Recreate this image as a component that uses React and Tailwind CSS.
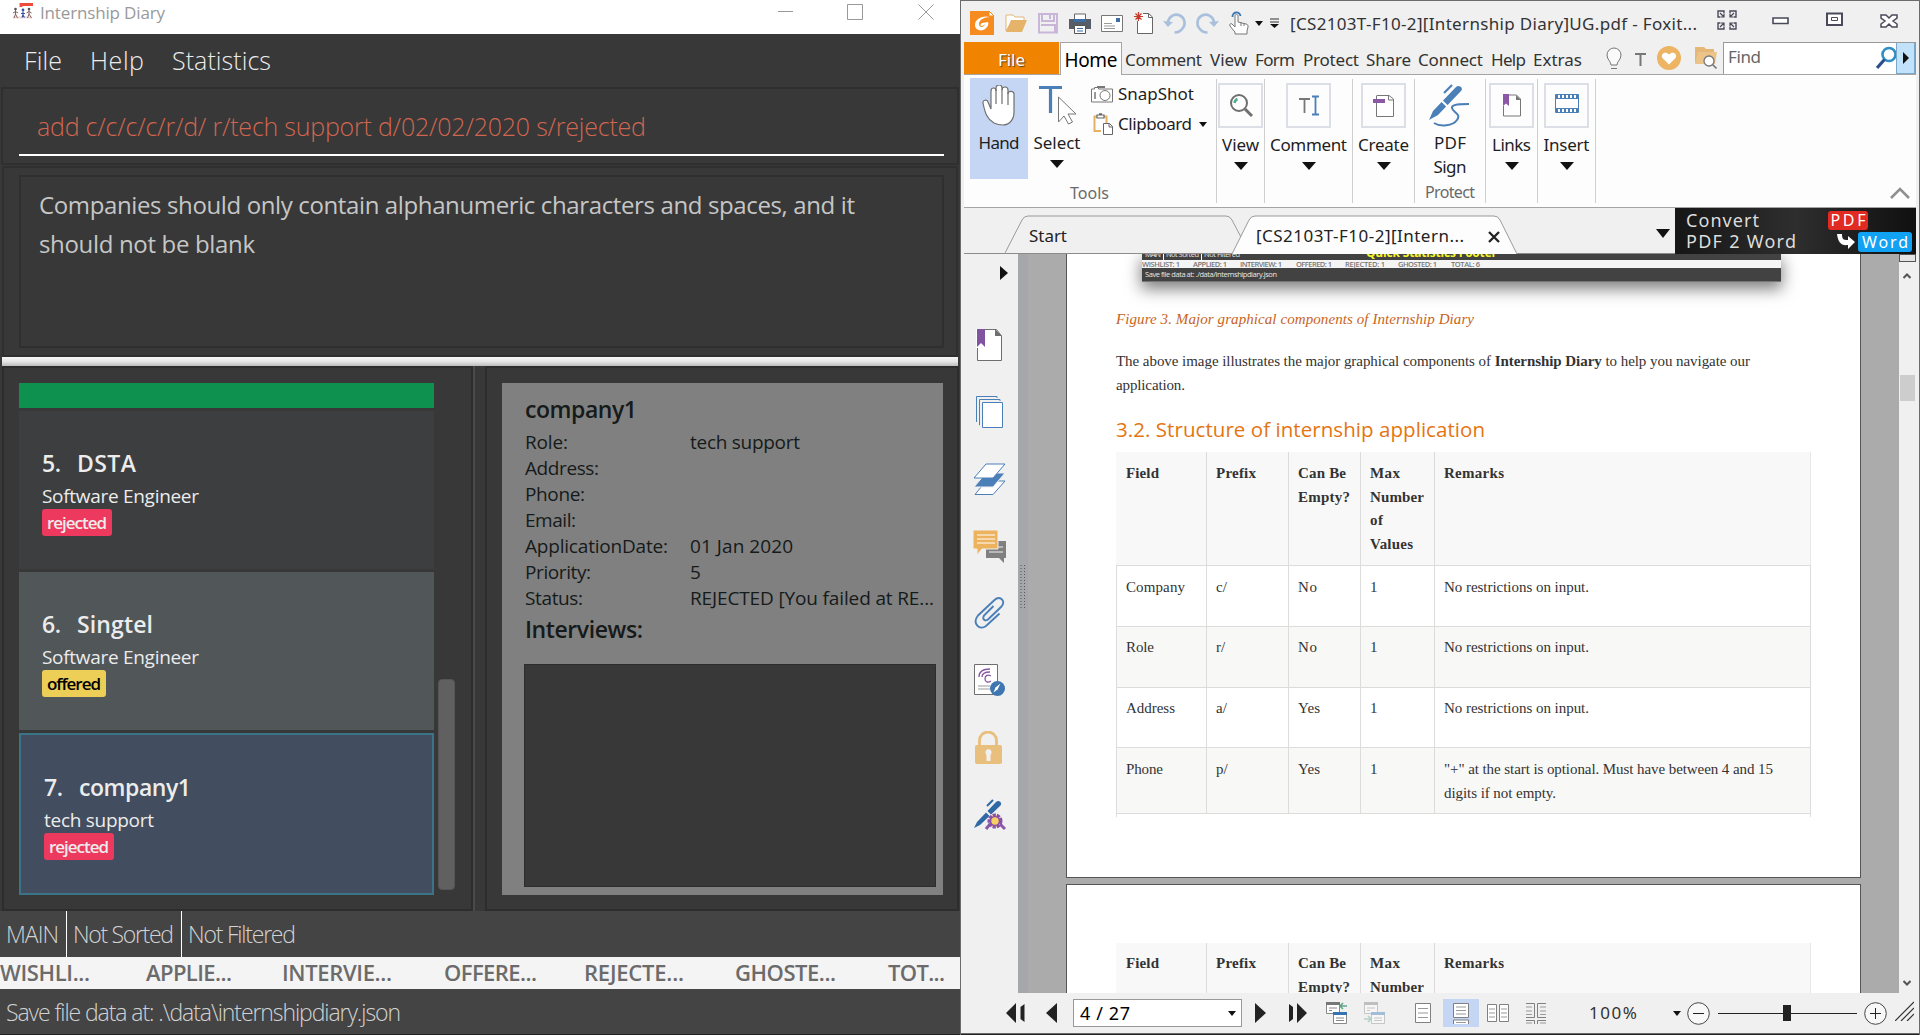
import React, { useLayoutEffect, useRef } from "react";

/* One line of text whose tracking is adjusted so that it fills its box. */
function Fit({ className = "", children }) {
  const box = useRef(null);
  const text = useRef(null);
  useLayoutEffect(() => {
    const el = text.current;
    el.style.letterSpacing = "0px";
    const gaps = Math.max(1, el.textContent.length - 1);
    const spare = box.current.clientWidth - el.getBoundingClientRect().width;
    el.style.letterSpacing = `${spare / gaps}px`;
  });
  return (
    <div ref={box} className={`shrink-0 whitespace-nowrap ${className}`}>
      <span ref={text}>{children}</span>
    </div>
  );
}

function Icon({ w, h, className = "", children }) {
  return (
    <svg width={w} height={h} viewBox={`0 0 ${w} ${h}`} fill="none" className={`block shrink-0 ${className}`}>
      {children}
    </svg>
  );
}

function Down({ w = 14, h = 8, className = "" }) {
  return (
    <Icon w={w} h={h} className={className}>
      <path d={`M0 0H${w}L${w / 2} ${h}Z`} fill="#111" />
    </Icon>
  );
}

/* ---------- Internship Diary ---------- */

function Badge({ tone, className, children }) {
  return (
    <div className={`flex h-[27px] items-center rounded-[3px] px-[5px] text-[17px] leading-[27px] font-semibold ${tone} ${className}`}>
      <Fit className="w-full">{children}</Fit>
    </div>
  );
}

function Company({ no, name, nameW, role, roleW, badge, tone, badgeW, className }) {
  return (
    <div className={className}>
      <div className="flex gap-4 text-[23px] leading-[30px] font-semibold">
        <Fit className="w-[19px]">{no}</Fit>
        <Fit className={nameW}>{name}</Fit>
      </div>
      <Fit className={`mt-[5px] text-[19px] leading-[26px] ${roleW}`}>{role}</Fit>
      <Badge tone={tone} className={badgeW}>{badge}</Badge>
    </div>
  );
}

const details = [
  ["Role:", "w-[43px]", "tech support", "w-[110px]"],
  ["Address:", "w-[74px]", "", ""],
  ["Phone:", "w-[60px]", "", ""],
  ["Email:", "w-[51px]", "", ""],
  ["ApplicationDate:", "w-[143px]", "01 Jan 2020", "w-[103px]"],
  ["Priority:", "w-[66px]", "5", "w-[10px]"],
  ["Status:", "w-[58px]", "REJECTED [You failed at RE...", "w-[244px]"],
];

const stats = [
  ["WISHLI...", "w-[90px]"],
  ["APPLIE...", "ml-[56px] w-[86px]"],
  ["INTERVIE...", "ml-[50px] w-[110px]"],
  ["OFFERE...", "ml-[52px] w-[93px]"],
  ["REJECTE...", "ml-[47px] w-[100px]"],
  ["GHOSTE...", "ml-[51px] w-[101px]"],
  ["TOT...", "ml-[52px] w-[57px]"],
];

function Diary() {
  return (
    <div className="flex h-[1035px] w-[960px] flex-col bg-[#383838] font-['Open_Sans',sans-serif] text-[#ececec]">
      <div className="flex h-[34px] items-start bg-white text-[#999]">
        <Icon w={21} h={18} className="mt-[2px] ml-3">
          <path d="M9 5V2.500H21" stroke="#ee4b3b" strokeWidth="2.800" />
          <path d="M1 15.500h19" stroke="#f0d9d5" strokeWidth="2" />
          <circle cx="3.500" cy="7" r="1.300" fill="#555" />
          <circle cx="11" cy="8" r="1.400" fill="#3452a8" />
          <circle cx="17" cy="7" r="1.300" fill="#555" />
          <path d="M3.500 8v4l-1.500 4M3.500 12l2 4M1 11l2.500-1.500 2.500 1.500M17 8v4l-1.500 4M17 12l2.500 4M14.500 11l2.500-1.500 2.500 1.500" stroke="#86605c" />
          <path d="M11 9.500v3.500l-1 2.500M11 13l1.500 2.500M9 11.500h4" stroke="#3452a8" strokeWidth="1.200" />
        </Icon>
        <Fit className="ml-[7px] w-[125px] text-[17px] leading-[25px]">Internship Diary</Fit>
        <Icon w={16} h={16} className="mt-1 ml-[613px]"><path d="M0 7.500H15" stroke="#999" /></Icon>
        <Icon w={16} h={16} className="mt-1 ml-[53px]"><path d="M.5 .5h15v15H.5z" stroke="#999" /></Icon>
        <Icon w={16} h={16} className="mt-1 ml-[55px]"><path d="M.5 .5l15 15M15.500 .5l-15 15" stroke="#999" /></Icon>
      </div>

      <div className="flex h-[53px] items-center pl-[24px] text-[25px] leading-[53px] font-light">
        <Fit className="w-[38px]">File</Fit>
        <Fit className="ml-[28px] w-[54px]">Help</Fit>
        <Fit className="ml-[28px] w-[99px]">Statistics</Fit>
      </div>

      <div className="mx-px h-[78px] border-2 border-[#2f2f2f] pt-[17px] pr-[13px] pl-[16px]">
        <div className="h-[50px] border-b-2 border-white pl-[18px] text-[25px] leading-[41px] font-light text-[#d06651]">
          <Fit className="w-[609px]">add c/c/c/c/r/d/ r/tech support d/02/02/2020 s/rejected</Fit>
        </div>
      </div>

      <div className="mx-[2px] mt-px h-[191px] border-2 border-[#2f2f2f] py-[7px] pr-[12px] pl-[15px]">
        <div className="h-[173px] border-2 border-[#2f2f2f] pt-[8px] pl-[18px] text-[24px] leading-[39px] text-[#c6c6c6]">
          <Fit className="w-[816px]">Companies should only contain alphanumeric characters and spaces, and it</Fit>
          <Fit className="w-[216px]">should not be blank</Fit>
        </div>
      </div>

      <div className="mx-[2px] h-[9px] bg-linear-to-b from-[#f6f6f6] via-[#e6e6e6] to-[#bdbdbd]" />

      <div className="flex h-[545px]">
        <div className="ml-[2px] flex w-[471px] border-2 border-[#2d2d2d] pt-[15px] pl-[15px]">
          <div className="flex w-[415px] flex-col gap-[3px]">
            <div className="h-[25px] bg-[#0e914f]" />
            <Company no="5." name="DSTA" nameW="w-[59px]" role="Software Engineer" roleW="w-[157px]" badge="rejected"
              tone="bg-[#ed395d]" badgeW="w-[70px]" className="h-[158px] bg-[#3c3e3f] pt-[37px] pl-[23px]" />
            <Company no="6." name="Singtel" nameW="w-[76px]" role="Software Engineer" roleW="w-[157px]" badge="offered"
              tone="bg-[#edce57] text-black" badgeW="w-[64px]" className="h-[158px] bg-[#515658] pt-[37px] pl-[23px]" />
            <Company no="7." name="company1" nameW="w-[112px]" role="tech support" roleW="w-[110px]" badge="rejected"
              tone="bg-[#ed395d]" badgeW="w-[70px]" className="h-[162px] border-2 border-[#3b7489] bg-[#424d5f] pt-[37px] pl-[23px]" />
          </div>
          <div className="mt-[296px] ml-1 h-[211px] w-[17px] rounded-[4px] border border-[#555] bg-[#606060]" />
        </div>
        <div className="w-[12px] border-l-2 border-[#4a4a4a]" />
        <div className="w-[474px] border-2 border-[#2d2d2d] pt-[15px] pl-[15px]">
          <div className="h-[512px] w-[441px] bg-[#808080] pt-[11px] pl-[22px] text-[#151a1a]">
            <Fit className="ml-px w-[112px] text-[23px] leading-[30px] font-semibold">company1</Fit>
            <div className="mt-[5px] ml-px text-[19px] leading-[26px]">
              {details.map(([label, lw, value, vw]) => (
                <div key={label} className="flex">
                  <div className="w-[165px]"><Fit className={lw}>{label}</Fit></div>
                  {value && <Fit className={vw}>{value}</Fit>}
                </div>
              ))}
            </div>
            <Fit className="mt-[3px] ml-px w-[118px] text-[23px] leading-[30px] font-semibold">Interviews:</Fit>
            <div className="mt-[20px] h-[223px] w-[412px] border border-[#2d2d2d] bg-[#383838]" />
          </div>
        </div>
      </div>

      <div className="flex h-[46px] bg-[#444] pl-[6px] text-[23px] leading-[47px] font-light text-[#d2d2d2]">
        <Fit className="w-[53px]">MAIN</Fit>
        <div className="ml-[7px] w-px bg-white" />
        <Fit className="ml-[6px] w-[101px]">Not Sorted</Fit>
        <div className="ml-[7px] w-px bg-white" />
        <Fit className="ml-[6px] w-[108px]">Not Filtered</Fit>
      </div>
      <div className="flex h-[32px] bg-[#f4f4f4] text-[22px] leading-[31px] font-semibold text-[#6b6b6b]">
        {stats.map(([label, c]) => <Fit key={label} className={c}>{label}</Fit>)}
      </div>
      <div className="h-[46px] border-b border-[#222] bg-[#444] pl-[6px] text-[23px] leading-[46px] font-light text-[#d2d2d2]">
        <Fit className="w-[395px]">Save file data at: .\data\internshipdiary.json</Fit>
      </div>
    </div>
  );
}

/* ---------- PDF viewer ---------- */

function TitleBar() {
  return (
    <div className="flex h-[41px] items-center pt-[3px] pl-[9px]">
      <Icon w={24} h={24}>
        <path d="M0 0h19l5 5v19H0z" fill="#f68b1f" />
        <path d="M19 0v5h5z" fill="#fff" stroke="#f68b1f" />
        <path d="M20 6C12 4 5 8 5 14c0 5 6 7 10 4 3-2 4-5 3-7l-6 1c-2 1-2 3 0 3 1 0 2-1 3-2-1 4-6 4-6 0 0-4 5-7 11-7z" fill="#fff" />
      </Icon>
      <Icon w={22} h={24} className="ml-[11px]">
        <path d="M1 20V4h7l2 2h9v4H7L1 20" fill="#fff" stroke="#e0b878" />
        <path d="M6 9h16l-5 12H1z" fill="#e5b36a" />
      </Icon>
      <Icon w={20} h={24} className="ml-[11px]">
        <path d="M1 3h18v18.500H1z" stroke="#c9b5d8" strokeWidth="2" />
        <path d="M4 3v7h12V3M3 14h14v8" stroke="#c9b5d8" strokeWidth="2" />
        <path d="M11 4h2v4h-2z" fill="#c9b5d8" />
      </Icon>
      <Icon w={22} h={24} className="ml-[11px]">
        <path d="M5.500 8V3h11v5" fill="#fff" stroke="#666" />
        <path d="M0 8h22v10H0z" fill="#555e66" />
        <path d="M5 8h12v3H5z" fill="#3c6ea5" />
        <path d="M5.500 14.500h11v8h-11z" fill="#fff" stroke="#555" />
        <path d="M8 17.500h6M8 20h6" stroke="#3c6ea5" />
      </Icon>
      <Icon w={22} h={24} className="ml-[10px]">
        <path d="M.5 4.500h21v16H.5z" fill="#fff" stroke="#777" />
        <path d="M15 7h4v4h-4z" fill="#3c6ea5" />
        <path d="M3 12.500h8M3 15h11M3 17.500h11" stroke="#999" />
      </Icon>
      <Icon w={19} h={24} className="ml-[11px]">
        <path d="M3.500 10v12.500h15V6l-4-3.500H9" fill="#fff" stroke="#666" />
        <path d="M14.500 2.500V6.500h4" stroke="#666" />
        <path d="M4.500 1v9M0 5.500h9M1.500 2.500l6 6M7.500 2.500l-6 6" stroke="#c23b2b" strokeWidth="1.200" />
      </Icon>
      <Icon w={24} h={24} className="ml-[10px]">
        <path d="M5 11C6 5 12 2 17 4.500s6 9 2.500 13c-2 3-5 4-8 4" stroke="#a9c0dc" strokeWidth="2.600" />
        <path d="M0 10l5 6 5-5z" fill="#a9c0dc" />
      </Icon>
      <Icon w={24} h={24} className="ml-[8px]">
        <path d="M19 11C18 5 12 2 7 4.500s-6 9-2.500 13c2 3 5 4 8 4" stroke="#a9c0dc" strokeWidth="2.600" />
        <path d="M24 10l-5 6-5-5z" fill="#a9c0dc" />
      </Icon>
      <Icon w={20} h={24} className="ml-[10px]">
        <path d="M5 20l-4-5c-1-2 1-3 2-2l3 3V5c0-2 3-2 3 0v6l8 2c2 .5 2 1 2 3l-1 4v3H6v-2z" fill="#fff" stroke="#777" />
        <path d="M3.500 6a4 4 0 1 1 8-1" stroke="#3c78b4" strokeWidth="1.800" />
        <path d="M12 11v4M15 12v3" stroke="#777" />
      </Icon>
      <Down w={8} h={5} className="ml-[6px]" />
      <Icon w={9} h={10} className="ml-[7px]"><path d="M0 1h9M0 4h9" stroke="#333" /><path d="M0 6h9L4.500 10z" fill="#111" /></Icon>
      <Fit className="mt-px ml-[11px] w-[407px] text-[17px] leading-6 text-[#333]">[CS2103T-F10-2][Internship Diary]UG.pdf - Foxit...</Fit>
      <Icon w={20} h={21} className="-mt-[6px] ml-[20px]">
        <g stroke="#4a4a5a" strokeWidth="1.400">
          <path d="M7 3.500V1H1v6h2.500M13 3.500V1h6v6h-2.500M7 16.500V19H1v-6h2.500M13 16.500V19h6v-6h-2.500" />
          <path d="M3 3l4 4M4 7h3V4M17 3l-4 4M16 7h-3V4M3 17l4-4M4 13h3v3M17 17l-4-4M16 13h-3v3" strokeWidth="1.200" />
        </g>
      </Icon>
      <Icon w={17} h={8} className="-mt-[5px] ml-[35px]"><path d="M1 1h15v5.500H1z" fill="#fff" stroke="#4a4a5a" strokeWidth="1.600" /></Icon>
      <Icon w={17} h={14} className="-mt-[8px] ml-[37px]">
        <path d="M1 1.500h15v11.500H1z" fill="#fff" stroke="#4a4a5a" strokeWidth="2" />
        <path d="M5.500 5.500h6v3h-6z" stroke="#4a4a5a" />
      </Icon>
      <Icon w={18} h={14} className="-mt-[5px] ml-[37px]">
        <path d="M1 1h5l3 3 3-3h5v3l-4 3 4 3v3h-5l-3-3-3 3H1v-3l4-3-4-3z" fill="#fff" stroke="#4a4a5a" strokeWidth="1.500" />
      </Icon>
    </div>
  );
}

const menus = [
  ["Comment", "ml-[3px] w-[77px]"],
  ["View", "ml-[8px] w-[37px]"],
  ["Form", "ml-[8px] w-[40px]"],
  ["Protect", "ml-[8px] w-[56px]"],
  ["Share", "ml-[7px] w-[45px]"],
  ["Connect", "ml-[7px] w-[65px]"],
  ["Help", "ml-[8px] w-[35px]"],
  ["Extras", "ml-[7px] w-[49px]"],
];

function MenuBar() {
  return (
    <div className="mx-[3px] flex h-[33px] border-b border-[#a5a5a5] text-[17px] leading-[35px] text-[#333]">
      <div className="flex h-8 w-[95px] justify-center bg-[#f08300] text-white text-shadow-[1px_1px_1px_#5a4020]">
        <Fit className="w-[27px]">File</Fit>
      </div>
      <div className="ml-px flex h-[33px] w-[62px] justify-center border-x border-t border-[#a5a5a5] bg-[#fdfdfd] text-[19px] leading-[34px] text-black">
        <Fit className="w-[53px]">Home</Fit>
      </div>
      {menus.map(([label, c]) => <Fit key={label} className={c}>{label}</Fit>)}
      <Icon w={16} h={23} className="mt-[5px] ml-[24px]">
        <path d="M5 18c0-4-4-5-4-10a7 7 0 0 1 14 0c0 5-4 6-4 10zM5 21.500h6" stroke="#777" fill="#fafafa" />
      </Icon>
      <Icon w={11} h={13} className="mt-[11px] ml-[13px]"><path d="M0 1h11M5.500 1v12" stroke="#777" strokeWidth="2" /></Icon>
      <Icon w={24} h={24} className="mt-[4px] ml-[11px]">
        <circle cx="12" cy="12" r="12" fill="#ecb463" />
        <path d="M12 18.500L5.500 12C3 8.500 8 4.500 12 8.500c4-4 9 0 6.500 3.500z" fill="#fff" />
      </Icon>
      <Icon w={22} h={23} className="mt-[5px] ml-[14px]">
        <path d="M0 17V0h9l2 2h8v4H5z" fill="#e5b878" />
        <path d="M3 5h19l-2 12H0z" fill="#ecc48a" />
        <circle cx="14" cy="14" r="5" fill="#fff" stroke="#777" strokeWidth="1.300" />
        <path d="M17.500 17.500l4 4" stroke="#777" strokeWidth="1.600" />
      </Icon>
      <div className="ml-auto flex h-8 w-[193px] border border-[#999] border-b-0 bg-white">
        <Fit className="ml-[4px] w-[33px] leading-[28px] text-[#666]">Find</Fit>
        <Icon w={20} h={24} className="mt-[3px] ml-[115px]">
          <circle cx="13" cy="8.500" r="6.500" stroke="#2f8fc4" strokeWidth="2.600" />
          <path d="M8.500 13.500L1 22" stroke="#2c4f8c" strokeWidth="3.200" />
        </Icon>
        <div className="flex w-5 items-center justify-center border border-t-0 border-[#7aa7cc] bg-[#c2e2fb]">
          <Icon w={6} h={12}><path d="M0 0l6 6-6 6z" fill="#111" /></Icon>
        </div>
      </div>
    </div>
  );
}

function RibbonGroup({ className, label, labelW, children }) {
  return (
    <div className={`mt-1 flex h-[124px] flex-col items-center border-r border-[#cfcfcf] pt-1 ${className}`}>
      <div className="flex h-[45px] w-[45px] items-center justify-center border-2 border-[#dcdfe5] bg-[#fdfdfd]">{children}</div>
      <Fit className={`mt-[5px] leading-6 ${labelW}`}>{label}</Fit>
      <Down className="mt-[5px]" />
    </div>
  );
}

function Ribbon() {
  return (
    <div className="mx-[3px] flex h-[133px] border-b border-[#a5a5a5] bg-[#fdfdfd] pl-[6px] text-[17px] text-[#1e1e1e]">
      <div className="mt-1 flex h-[124px] w-[247px] flex-col border-r border-[#cfcfcf]">
        <div className="flex h-[100px]">
          <div className="-mt-px flex h-[101px] w-[58px] flex-col items-center bg-[#c4d6f3] pt-[7px]">
            <Icon w={34} h={41}>
              <path d="M12 38C5 34 3 28 1 18c-.5-3 4-4 5-1l3 7V6c0-4 5-4 5 0V3c0-4 6-4 6 0v2c0-4 6-4 6 0v4c0-4 6-3 6 0v18c0 8-5 13-11 13-4 0-7-1-9-2z" fill="#fff" stroke="#707070" strokeWidth="1.200" />
              <path d="M14 4v15M20 4v15M26 7v13" stroke="#707070" strokeWidth="1.200" />
            </Icon>
            <Fit className="mt-[5px] w-[41px] leading-6">Hand</Fit>
          </div>
          <div className="ml-[5px] flex w-[48px] flex-col items-center pt-[6px]">
            <Icon w={38} h={40}>
              <path d="M1 2.500h23M12.500 2v26" stroke="#4a7fb8" strokeWidth="3.200" />
              <path d="M20.500 12v25l5.500-6 4.500 8 4-2-4.500-8h8z" fill="#fff" stroke="#777" />
            </Icon>
            <Fit className="mt-[6px] w-[47px] leading-6">Select</Fit>
            <Down className="mt-[5px]" />
          </div>
          <div className="ml-[10px] pt-[3px]">
            <div className="flex items-center">
              <Icon w={22} h={17}>
                <path d="M.5 3h3V1.500h4V3h14v13H.5z" stroke="#777" fill="#fff" /><path d="M4 6v7" stroke="#777" strokeWidth="1.500" />
                <circle cx="14" cy="9.500" r="5" stroke="#777" fill="#fff" /><path d="M6 1h8" stroke="#777" strokeWidth="2" />
              </Icon>
              <Fit className="ml-[5px] w-[76px] leading-6">SnapShot</Fit>
            </div>
            <div className="mt-[6px] flex items-center">
              <Icon w={20} h={22} className="ml-[2px]">
                <path d="M8 18H1.500V3.500h12V10" stroke="#e5b265" strokeWidth="2" fill="#fff" />
                <path d="M4 2h7v3H4zM6 .8h3" stroke="#666" strokeWidth="1.200" fill="#fff" />
                <path d="M10.500 10.500h6l3 3v8h-9z" fill="#fff" stroke="#666" /><path d="M16 10v4h4" stroke="#666" />
              </Icon>
              <Fit className="ml-[5px] w-[74px] leading-6">Clipboard</Fit>
              <Down w={8} h={5} className="ml-[7px]" />
            </div>
          </div>
        </div>
        <Fit className="mt-[2px] ml-[100px] w-[39px] text-[16px] leading-6 text-[#6a6a6a]">Tools</Fit>
      </div>
      <RibbonGroup className="w-[48px]" label="View" labelW="w-[37px]">
        <Icon w={24} h={24}>
          <circle cx="10" cy="9" r="8" stroke="#6f6f6f" strokeWidth="2" fill="#fff" />
          <path d="M5.500 9a5 5 0 0 1 3-4" stroke="#4fae8b" strokeWidth="2.500" />
          <path d="M16 15l7 7" stroke="#6f6f6f" strokeWidth="3" />
        </Icon>
      </RibbonGroup>
      <RibbonGroup className="w-[88px]" label="Comment" labelW="w-[77px]">
        <Icon w={22} h={22}>
          <path d="M1 4h11M6.500 4v14" stroke="#777" strokeWidth="1.800" />
          <path d="M14 1.500h7M14 19.500h7M17.500 1.500v18" stroke="#4a7fb8" strokeWidth="1.800" />
        </Icon>
      </RibbonGroup>
      <RibbonGroup className="w-[62px]" label="Create" labelW="w-[51px]">
        <Icon w={22} h={24}>
          <path d="M3.500 2v20.500h17V5L16 1.500H3.500M15.500 1.500V6h5" stroke="#777" fill="#fff" />
          <path d="M0 5h12v4H0z" fill="#8a58a5" />
        </Icon>
      </RibbonGroup>
      <div className="mt-1 flex h-[124px] w-[71px] flex-col items-center border-r border-[#cfcfcf] pt-[5px]">
        <Icon w={42} h={43} className="-ml-[4px]">
          <path d="M2 36l4-9L29 3c3-3 8 1 5 4L11 31z" fill="#4a7fb8" />
          <path d="M15 17l6 6" stroke="#fdfdfd" strokeWidth="2" />
          <path d="M17 9l8-8" stroke="#4a7fb8" strokeWidth="2.200" />
          <path d="M7 39c6 4 19 3 23-3 5-7-6-8-5-13 1-3 8-3 17-3" stroke="#4a7fb8" strokeWidth="2" />
        </Icon>
        <Fit className="mt-[4px] w-8 leading-[23px]">PDF</Fit>
        <Fit className="mt-px w-[33px] leading-[23px]">Sign</Fit>
        <Fit className="mt-[2px] w-[50px] text-[16px] leading-6 text-[#6a6a6a]">Protect</Fit>
      </div>
      <RibbonGroup className="w-[52px]" label="Links" labelW="w-[39px]">
        <Icon w={18} h={23}>
          <path d="M.5 12v10h17V5l-4-4H6" stroke="#777" fill="#fff" /><path d="M13 1v5h5" fill="#777" />
          <path d="M0 0h6v12l-3-2.500L0 12z" fill="#8a58a5" />
        </Icon>
      </RibbonGroup>
      <RibbonGroup className="w-[58px]" label="Insert" labelW="w-[46px]">
        <Icon w={24} h={20} className="-mt-1">
          <path d="M.5 .5h23v18H.5z" stroke="#4a7fb8" fill="#fff" />
          <path d="M1 2.500h22M1 16.500h22" stroke="#4a7fb8" strokeWidth="3" strokeDasharray="2 2" /><path d="M1 4.500h22M1 14.500h22" stroke="#4a7fb8" />
        </Icon>
      </RibbonGroup>
      <Icon w={20} h={12} className="mt-[112px] ml-[294px]"><path d="M1 11l9-9 9 9" stroke="#8f8f8f" strokeWidth="2.600" /></Icon>
    </div>
  );
}

function DocTabs() {
  return (
    <div className="mx-[3px] flex h-[46px] border-b border-[#8c8c8c] text-[17px] leading-6 text-[#222]">
      <div className="relative ml-[41px] h-[46px] w-[237px] pt-[16px] pl-6">
        <Icon w={237} h={46} className="absolute top-0 left-0">
          <path d="M0 45L17 12q2-4 6-4h198q4 0 6 4l10 19" stroke="#9a9a9a" />
        </Icon>
        <Fit className="w-[38px]">Start</Fit>
      </div>
      <div className="relative -ml-[10px] flex h-[46px] w-[288px] pt-[16px] pl-6">
        <Icon w={288} h={46} className="absolute top-0 left-0">
          <path d="M0 46L17 12q2-4 6-4h239q4 0 6 4l17 34" fill="#fdfdfd" stroke="#9a9a9a" />
        </Icon>
        <Fit className="relative w-[208px]">[CS2103T-F10-2][Intern...</Fit>
        <Icon w={12} h={12} className="relative mt-[7px] ml-[24px]"><path d="M1 1l10 10M11 1L1 11" stroke="#222" strokeWidth="2.300" /></Icon>
      </div>
      <Down h={9} className="mt-[21px] ml-[136px]" />
      <div className="ml-[5px] grid h-[46px] w-[241px] shrink-0 grid-cols-[142px_1fr] bg-linear-to-r from-[#161616] via-[#2e2e2e] to-[#101010] pl-[11px] text-[18px] leading-[21px] text-[#ddd]">
        <div className="pt-[2px]">
          <Fit className="w-[73px]">Convert</Fit>
          <Fit className="w-[110px]">PDF 2 Word</Fit>
        </div>
        <div className="pt-[3px] text-white">
          <div className="flex h-[19px] w-10 justify-center rounded-[3px] bg-[#e02a22] text-[16px] leading-[19px]"><Fit className="w-[35px]">PDF</Fit></div>
          <div className="mt-[2px] flex">
            <Icon w={18} h={16} className="mt-[2px] ml-[9px]"><path d="M0 0h5c0 5 1 6 6 6V2l7 6-7 7v-4C4 12 1 8 0 0z" fill="#fff" /></Icon>
            <div className="ml-[3px] flex h-5 w-[54px] justify-center rounded-[3px] bg-[#12a2f4] text-[16px] leading-[20px]"><Fit className="w-[46px]">Word</Fit></div>
          </div>
        </div>
      </div>
    </div>
  );
}

function Sidebar() {
  return (
    <div className="flex w-[57px] shrink-0 flex-col">
      <Icon w={8} h={14} className="mt-3 ml-[39px]"><path d="M0 0l8 7-8 7z" fill="#111" /></Icon>
      <div className="mt-[49px] ml-[12px] flex flex-col gap-[34px]">
        <Icon w={33} h={33}>
          <path d="M4.500 .5h19L28.500 7v24.500h-24z" fill="#fff" stroke="#6f6f6f" /><path d="M22 0v7h7z" fill="#6f6f6f" />
          <path d="M3 0h9v19H3z" fill="#fff" /><path d="M4 0h8v18l-4-4-4 4z" fill="#8154a0" />
        </Icon>
        <Icon w={33} h={33}>
          <path d="M24 2V.5H3.500V26M7 29H6.500V3.500H27V5" stroke="#4a7fb8" fill="none" />
          <path d="M9.500 6.500h20v25h-20z" stroke="#4a7fb8" fill="#fff" />
        </Icon>
        <Icon w={33} h={33}>
          <path d="M2 31.500L13 18h19L20 31.500z" fill="#fff" stroke="#4a7fb8" />
          <path d="M1 24L13 10h19L20 24z" fill="#4a7fb8" stroke="#f0f0f0" />
          <path d="M1 15L13 1h19L20 15z" fill="#fff" stroke="#4a7fb8" />
        </Icon>
        <Icon w={33} h={33}>
          <path d="M13 11h20v17h-2v5l-5-5H13z" fill="#808080" /><path d="M16 17h14M16 22h14" stroke="#f0f0f0" />
          <path d="M0 0h25v19H9l-5 6v-6H0z" fill="#ecb25e" stroke="#f0f0f0" /><path d="M4 5h18M4 9h18M4 13h18" stroke="#fff" />
        </Icon>
        <Icon w={33} h={33}>
          <path d="M20.500 9L11 18.500c-2 4 1 6 4 4L28.500 9.500c5-6-2-11-7-6.500L5 18.500C-1 26 6 34 13 29l13.500-12.500" stroke="#4a7fb8" strokeWidth="1.900" />
        </Icon>
        <Icon w={33} h={33}>
          <path d="M1.500 .5h23v30h-23z" fill="#fff" stroke="#6f6f6f" />
          <path d="M5 22h12M5 25h12" stroke="#9a9a9a" />
          <path d="M6 13c0-5 4-8 11-8M9 13c0-4 3-5 8-5M18 12c-4-2-6 0-6 3s3 4 6 2" stroke="#8a58a5" strokeWidth="1.300" />
          <circle cx="24.500" cy="24.500" r="7.500" fill="#3f76b0" /><path d="M20.500 28.500l2-5 5-4-3 6z" fill="#fff" />
        </Icon>
        <Icon w={33} h={34}>
          <path d="M6.500 14V9.500a8.500 8.500 0 0 1 17 0V14" stroke="#e8bf7c" strokeWidth="2.800" />
          <rect x="2" y="14" width="27" height="19" rx="2" fill="#e8bf7c" />
          <path d="M15.500 18a3.500 3.500 0 0 1 2 6v6h-4v-6a3.500 3.500 0 0 1 2-6z" fill="#f0f0f0" />
        </Icon>
        <Icon w={33} h={33}>
          <path d="M1 29l3-6L23 3c3-3 7 1 4 4L7 26z" fill="#2f68a4" /><path d="M13 12l5 5" stroke="#f0f0f0" strokeWidth="2" />
          <path d="M14 7l6-6" stroke="#2f68a4" strokeWidth="2" />
          <path d="M18 24l-5 6M26 24l6 6" stroke="#8a58a5" strokeWidth="3" />
          <circle cx="22" cy="22" r="6" fill="#f6cf62" stroke="#8a4fa8" strokeWidth="3" strokeDasharray="3.200 1" />
          <circle cx="22" cy="22" r="4.500" fill="#f6cf62" stroke="#8a4fa8" strokeWidth="1.600" />
        </Icon>
      </div>
    </div>
  );
}

const heads = [
  ["pl-[10px]", [["Field", "w-[33px]"]]],
  ["border-l pl-[9px]", [["Prefix", "w-[40px]"]]],
  ["border-l pl-[9px]", [["Can Be", "w-[48px]"], ["Empty?", "w-[52px]"]]],
  ["border-l pl-[9px]", [["Max", "w-[30px]"], ["Number", "w-[54px]"], ["of", "w-[13px]"], ["Values", "w-[43px]"]]],
  ["border-l pl-[9px]", [["Remarks", "w-[60px]"]]],
];

const free = [["No restrictions on input.", "w-[145px]"]];
const rows = [
  ["h-[61px] pt-[10px]", "Company", "w-[59px]", "c/", "No", "w-[19px]", free],
  ["h-[61px] pt-[9px] bg-[#f8f8f7]", "Role", "w-[28px]", "r/", "No", "w-[19px]", free],
  ["h-[60px] pt-[9px]", "Address", "w-[49px]", "a/", "Yes", "w-[22px]", free],
  ["h-[66px] pt-[10px] bg-[#f8f8f7]", "Phone", "w-[37px]", "p/", "Yes", "w-[22px]",
    [['"+" at the start is optional. Must have between 4 and 15', "w-[329px]"], ["digits if not empty.", "w-[112px]"]]],
];

const grid = "grid w-[695px] grid-cols-[90px_82px_72px_74px_377px]";

function Cell({ pad, children }) {
  return <div className={`-mt-[10px] border-l border-[#dcdcdc] pt-[10px] ${pad}`}>{children}</div>;
}

function TableHead({ className }) {
  return (
    <div className={`${grid} h-[113px] border-r border-[#e8e8e8] bg-[#f8f8f8] font-bold ${className}`}>
      {heads.map(([c, lines]) => (
        <div key={lines[0][0]} className={`border-[#dcdcdc] ${c}`}>
          {lines.map(([t, w]) => <Fit key={t} className={w}>{t}</Fit>)}
        </div>
      ))}
    </div>
  );
}

const thumbStats = [
  ["WISHLIST: 1", "w-[38px]"],
  ["APPLIED: 1", "ml-[13px] w-[34px]"],
  ["INTERVIEW: 1", "ml-[13px] w-[42px]"],
  ["OFFERED: 1", "ml-[14px] w-[36px]"],
  ["REJECTED: 1", "ml-[13px] w-[40px]"],
  ["GHOSTED: 1", "ml-[13px] w-[39px]"],
  ["TOTAL: 6", "ml-[14px] w-[29px]"],
];

function Pages() {
  return (
    <div className="flex-1 overflow-hidden bg-[#ababab] pl-[38px] font-['Liberation_Serif',serif] text-[15px] leading-[23.600px] text-[#333]">
      <div className="h-[624px] w-[795px] overflow-hidden border-x border-b border-[#555] bg-white pl-[49px]">
        <div className="ml-[26px] h-[28px] w-[639px] border-b border-[#777] bg-[#424242] font-['Open_Sans',sans-serif] text-[7.500px] text-[#e8e8e8] shadow-[0_6px_16px_1px_rgba(0,0,0,0.5)]">
          <div className="flex h-[6px] overflow-hidden">
            <Fit className="ml-[3px] w-[16px] -translate-y-[5px] leading-[10px]">MAIN</Fit>
            <div className="ml-[2px] w-px bg-white" />
            <Fit className="ml-[2px] w-[33px] -translate-y-[5px] leading-[10px]">Not Sorted</Fit>
            <div className="ml-[2px] w-px bg-white" />
            <Fit className="ml-[2px] w-[36px] -translate-y-[5px] leading-[10px]">Not Filtered</Fit>
            <Fit className="ml-[126px] w-[131px] -translate-y-[10px] text-[12px] leading-[17px] font-bold text-[#f4f42a]">Quick Statistics Footer</Fit>
          </div>
          <div className="flex h-2 bg-[#f4f4f4] leading-[8px] font-semibold text-[#777]">
            {thumbStats.map(([t, c]) => <Fit key={t} className={c}>{t}</Fit>)}
          </div>
          <Fit className="ml-[3px] w-[132px] leading-[13px]">Save file data at: ./data/internshipdiary.json</Fit>
        </div>
        <Fit className="mt-[25px] w-[358px] leading-6 text-[#c8641c] italic">Figure 3. Major graphical components of Internship Diary</Fit>
        <Fit className="mt-[19px] w-[634px]">The above image illustrates the major graphical components of <b>Internship Diary</b> to help you navigate our</Fit>
        <Fit className="w-[69px]">application.</Fit>
        <Fit className="mt-[18px] w-[369px] font-['Open_Sans',sans-serif] text-[20.500px] leading-[29px] text-[#e47512]">3.2. Structure of internship application</Fit>
        <TableHead className="mt-[8px] pt-[10px] [&>div]:-mt-[10px] [&>div]:pt-[10px]" />
        {rows.map(([c, name, nw, prefix, empty, ew, remarks]) => (
          <div key={name} className={`${grid} border-t border-r border-[#dcdcdc] ${c}`}>
            <Cell pad="pl-[9px]"><Fit className={nw}>{name}</Fit></Cell>
            <Cell pad="pl-[9px]">{prefix}</Cell>
            <Cell pad="pl-[9px]"><Fit className={ew}>{empty}</Fit></Cell>
            <Cell pad="pl-[9px]">1</Cell>
            <Cell pad="pl-[9px]">{remarks.map(([t, w]) => <Fit key={t} className={w}>{t}</Fit>)}</Cell>
          </div>
        ))}
        <div className="h-1 w-[695px] border-x border-t border-[#dcdcdc]" />
      </div>
      <div className="mt-[6px] h-[120px] w-[795px] border-x border-t border-[#555] bg-white pl-[49px]">
        <TableHead className="mt-[58px] pt-[9px] [&>div]:-mt-[9px] [&>div]:pt-[9px]" />
      </div>
    </div>
  );
}

function ScrollBar() {
  return (
    <div className="mr-[3px] flex w-[17px] shrink-0 flex-col items-end">
      <div className="h-2 w-[17px] border border-[#555] bg-[#e4e4e4]" />
      <Icon w={8} h={6} className="mt-[11px] mr-[5px]"><path d="M.5 5L4 1.500 7.500 5" stroke="#555" strokeWidth="2" /></Icon>
      <div className="mt-[96px] mr-px h-[26px] w-[15px] bg-[#cdcdcd]" />
      <Icon w={8} h={6} className="mt-auto mr-[5px] mb-[7px]"><path d="M.5 1L4 4.500 7.500 1" stroke="#555" strokeWidth="2" /></Icon>
    </div>
  );
}

function Windows({ faded, className }) {
  return (
    <Icon w={22} h={22} className={className}>
      <g opacity={faded ? 0.4 : 1}>
        <path d="M.5 .5h13v11H.5z" fill="#fff" stroke="#888" /><path d="M0 0h14v3H0z" fill="#777" />
        <path d="M3 6h8M3 8.500h3" stroke="#888" />
        <path d="M7.500 10.500h13v11h-13z" fill="#fff" stroke="#888" /><path d="M7 10h14v3H7z" fill="#3573b1" />
        <path d="M10 16h8M10 18.500h8" stroke="#888" />
        <path d={faded ? "M0 17h7M4 14l3 3-3 3" : "M21 4h-7M17 1l-3 3 3 3"} stroke="#5fa587" strokeWidth="1.500" />
      </g>
    </Icon>
  );
}

function StatusBar() {
  return (
    <div className="flex h-10 items-center text-[17px] leading-6 text-[#333]">
      <Icon w={19} h={20} className="ml-[45px]"><path d="M10 0v20L0 10zM14.500 4l4-3v18l-4-3z" fill="#222" /></Icon>
      <Icon w={11} h={20} className="ml-[21px]"><path d="M11 0v20L0 10z" fill="#222" /></Icon>
      <div className="ml-[16px] flex h-7 w-[169px] items-center border border-[#999] bg-white pr-[5px] pl-[6px] text-[18px] text-black">
        <Fit className="-mt-px w-[50px]">4 / 27</Fit>
        <Down w={8} h={5} className="ml-auto" />
      </div>
      <Icon w={11} h={20} className="ml-[13px]"><path d="M0 0v20l11-10z" fill="#222" /></Icon>
      <Icon w={18} h={20} className="ml-[23px]"><path d="M0 1l4 3v12l-4 3zM8 0v20l10-10z" fill="#222" /></Icon>
      <Windows className="ml-[19px]" />
      <Windows faded className="ml-[16px]" />
      <Icon w={16} h={20} className="ml-[29px]">
        <path d="M.5 .5h15v19H.5z" fill="#fff" stroke="#808080" /><path d="M3 5.500h10M3 10h10M3 14.500h10" stroke="#999" />
      </Icon>
      <div className="ml-3 flex h-7 w-9 items-center justify-center bg-[#c4d6f3]">
        <Icon w={16} h={21}>
          <path d="M.5 .5h15v14H.5zM.5 21v-4h15v4" fill="#fff" stroke="#808080" /><path d="M3 4h10M3 7.500h10M3 11h10M3 19.500h10" stroke="#999" />
        </Icon>
      </div>
      <Icon w={22} h={18} className="ml-2">
        <path d="M.5 .5h9v17h-9zM12.500 .5h9v17h-9z" fill="#fff" stroke="#808080" /><path d="M2 5h6M2 9h6M2 13h6M14 5h6M14 9h6M14 13h6" stroke="#999" />
      </Icon>
      <Icon w={20} h={21} className="ml-[17px]">
        <path d="M0 .5h8.500v14H0M20 .5h-8.500v14H20M0 17.500h8.500V21M20 17.500h-8.500V21" stroke="#808080" />
        <path d="M0 4h6M0 8h6M0 11.500h6M14 4h6M14 8h6M14 11.500h6M0 20h6M14 20h6" stroke="#999" />
      </Icon>
      <Fit className="-mt-px ml-[43px] w-[48px]">100%</Fit>
      <Down w={8} h={5} className="ml-[36px]" />
      <Icon w={23} h={23} className="ml-[6px]"><circle cx="11.500" cy="11.500" r="10.800" stroke="#444" fill="#f8f8f8" /><path d="M6 11.500h11" stroke="#222" /></Icon>
      <div className="ml-2 flex h-4 w-[139px] items-center">
        <div className="h-px w-[65px] bg-[#222]" /><div className="h-4 w-2 bg-[#222]" /><div className="h-px flex-1 bg-[#222]" />
      </div>
      <Icon w={23} h={23} className="ml-[7px]"><circle cx="11.500" cy="11.500" r="10.800" stroke="#444" fill="#f8f8f8" /><path d="M6 11.500h11M11.500 6v11" stroke="#222" /></Icon>
      <Icon w={19} h={20} className="-mt-1 ml-[8px]"><path d="M0 20L19 1M6 20L19 7M12 20l7-7" stroke="#333" strokeWidth="1.200" /></Icon>
    </div>
  );
}

function Viewer() {
  return (
    <div className="flex h-[1035px] w-[960px] flex-col border-x border-t border-[#6b6b6b] bg-[#f0f0f0] font-['Noto_Sans',sans-serif]">
      <TitleBar />
      <MenuBar />
      <Ribbon />
      <DocTabs />
      <div className="flex h-[739px]">
        <Sidebar />
        <div className="flex w-[10px] shrink-0 flex-col items-center bg-[#a5a7aa]">
          <Icon w={6} h={44} className="mt-[311px]"><path d="M1 0v44M4.500 0v44" stroke="#555" strokeDasharray="1 2" /></Icon>
        </div>
        <Pages />
        <ScrollBar />
      </div>
      <StatusBar />
      <div className="h-px bg-[#6b6b6b]" />
      <div className="h-px bg-[#222]" />
    </div>
  );
}

export default function App() {
  return (
    <div className="flex h-[1035px] w-[1920px] overflow-hidden">
      <Diary />
      <Viewer />
    </div>
  );
}
